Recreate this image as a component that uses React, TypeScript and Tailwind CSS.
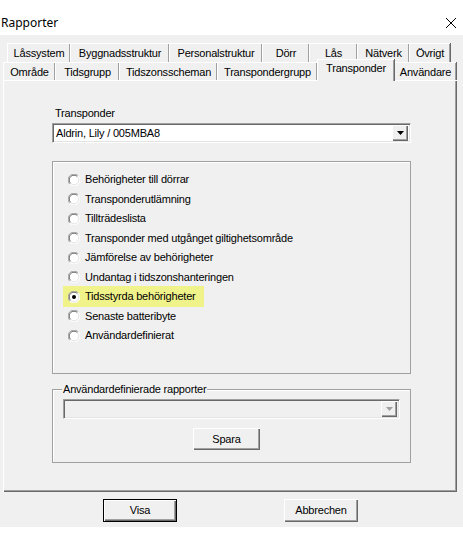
import React from "react";

const raised =
  "bg-[#f0f0f0] shadow-[inset_1px_1px_0_#ffffff,inset_-1px_-1px_0_#696969,inset_-2px_-2px_0_#a0a0a0]";

function Radio({ checked }: { checked?: boolean }) {
  return (
    <svg width="12" height="12" viewBox="0 0 12 12" className="shrink-0">
      <circle cx="6" cy="6" r="5.5" fill="#ffffff" />
      <path d="M1.8 10.2 A5.5 5.5 0 0 1 10.2 1.8" fill="none" stroke="#a0a0a0" strokeWidth="1" />
      <path d="M10.2 1.8 A5.5 5.5 0 0 1 1.8 10.2" fill="none" stroke="#ffffff" strokeWidth="1" />
      <path d="M2.6 9.4 A4.5 4.5 0 0 1 9.4 2.6" fill="none" stroke="#696969" strokeWidth="1" />
      <path d="M9.4 2.6 A4.5 4.5 0 0 1 2.6 9.4" fill="none" stroke="#e3e3e3" strokeWidth="1" />
      {checked && <circle cx="6" cy="6" r="2" fill="#000000" />}
    </svg>
  );
}

function Tab({ label, w, selected }: { label: string; w: number; selected?: boolean }) {
  if (selected) {
    return (
      <div
        style={{ width: w }}
        className="relative z-10 h-[22px] -mb-[1px] self-end bg-[#f0f0f0] border-l border-t border-white shadow-[inset_-1px_0_0_#a0a0a0,1px_0_0_#696969] flex justify-center pt-[2px]"
      >
        {label}
      </div>
    );
  }
  return (
    <div
      style={{ width: w }}
      className="h-full bg-[#f0f0f0] border-l border-t border-white shadow-[inset_-1px_0_0_#a0a0a0,1px_0_0_#696969] flex items-center justify-center pt-[1px]"
    >
      {label}
    </div>
  );
}

function Combo({ disabled, text }: { disabled?: boolean; text?: string }) {
  return (
    <div
      className={`flex items-center border border-t-[#a0a0a0] border-l-[#a0a0a0] border-r-white border-b-white shadow-[inset_1px_1px_0_#696969,inset_-1px_-1px_0_#e3e3e3] ${
        disabled ? "bg-[#f0f0f0]" : "bg-white"
      }`}
    >
      <div className="flex-1 pl-[3px] pt-[1px]">{text}</div>
      <div className={`w-[16px] h-[16px] mr-[2px] my-[1px] flex items-center justify-center ${raised}`}>
        <svg width="7" height="4" viewBox="0 0 7 4">
          <path d="M0 0 H7 L3.5 4 Z" fill={disabled ? "#a0a0a0" : "#000000"} />
        </svg>
      </div>
    </div>
  );
}

const radios = [
  "Behörigheter till dörrar",
  "Transponderutlämning",
  "Tillträdeslista",
  "Transponder med utgånget giltighetsområde",
  "Jämförelse av behörigheter",
  "Undantag i tidszonshanteringen",
  "Tidsstyrda behörigheter",
  "Senaste batteribyte",
  "Användardefinierat",
];

export default function App() {
  return (
    <div className="w-[463px] h-[540px] bg-white font-['Liberation_Sans',Arial,sans-serif] text-[11px] leading-[13px] tracking-[-0.2px] text-black overflow-hidden">
      <div className="h-[35px] flex items-center justify-between pl-[1px] pr-[6px] pt-[10px]">
        <span className="text-[12px] tracking-normal font-['Noto_Sans',sans-serif]">Rapporter</span>
        <svg width="10" height="10" viewBox="0 0 10 10" className="mr-[1px]">
          <path d="M0 0 L10 10 M10 0 L0 10" stroke="#000" strokeWidth="1" />
        </svg>
      </div>
      <div className="h-[492px] bg-[#f0f0f0] pt-[8px]">
        <div className="flex h-[19px] ml-[7px]">
          <Tab label="Låssystem" w={63} />
          <Tab label="Byggnadsstruktur" w={99} />
          <Tab label="Personalstruktur" w={93} />
          <Tab label="Dörr" w={47} />
          <Tab label="Lås" w={48} />
          <Tab label="Nätverk" w={52} />
          <Tab label="Övrigt" w={41} />
        </div>
        <div className="flex h-[18px] ml-[3px]">
          <Tab label="Område" w={52} />
          <Tab label="Tidsgrupp" w={64} />
          <Tab label="Tidszonsscheman" w={98} />
          <Tab label="Transpondergrupp" w={100} />
          <Tab label="Transponder" w={77} selected />
          <Tab label="Användare" w={62} />
        </div>
        <div className="ml-[3px] w-[454px] h-[412px] border-l border-t border-white shadow-[inset_-1px_-1px_0_#696969,inset_-2px_-2px_0_#a0a0a0] pt-[26px]">
          <div className="ml-[48px] w-[359px]">
            <div className="pl-[3px]">Transponder</div>
            <div className="mt-[3px] h-[20px]">
              <Combo text="Aldrin, Lily / 005MBA8" />
            </div>
            <div className="mt-[18px] h-[213px] border border-[#a0a0a0] shadow-[inset_1px_1px_0_#ffffff] pt-[8px] pl-[15px]">
              {radios.map((r, i) => (
                <div key={r} className="h-[19.5px] flex items-center">
                  {i === 6 ? (
                    <div className="flex items-center gap-[5px] h-[21px] bg-[#f0f28a] -ml-[5px] pl-[5px] pr-[8px]">
                      <Radio checked />
                      <span>{r}</span>
                    </div>
                  ) : (
                    <div className="flex items-center gap-[5px]">
                      <Radio />
                      <span>{r}</span>
                    </div>
                  )}
                </div>
              ))}
            </div>
            <fieldset className="mt-[9px] h-[80px] border border-[#a0a0a0] shadow-[inset_1px_1px_0_#ffffff] px-[10px]">
              <legend className="ml-[-1px] px-[1px]">Användardefinierade rapporter</legend>
              <div className="h-[19px] mt-[3px]">
                <Combo disabled />
              </div>
              <div className="mt-[10px] ml-[130px] w-[67px] h-[22px]">
                <button className={`w-full h-full ${raised}`}>Spara</button>
              </div>
            </fieldset>
          </div>
        </div>
        <div className="flex mt-[7px]">
          <button className="ml-[103px] w-[74px] h-[23px] border border-black bg-[#f0f0f0] shadow-[inset_1px_1px_0_#ffffff,inset_-1px_-1px_0_#696969,inset_-2px_-2px_0_#a0a0a0]">
            Visa
          </button>
          <button className={`ml-[107px] w-[74px] h-[23px] ${raised}`}>Abbrechen</button>
        </div>
      </div>
    </div>
  );
}
